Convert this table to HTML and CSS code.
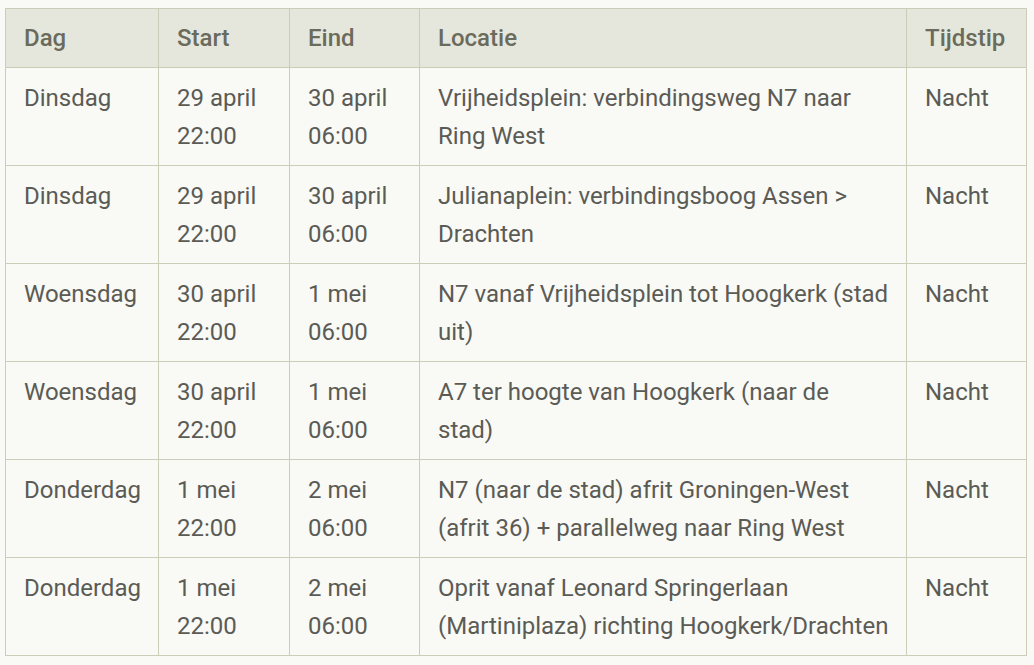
FILE: index.html
```html
<!DOCTYPE html>
<html lang="nl">
<head>
<meta charset="utf-8">
<link rel="stylesheet" href="styles.css">
</head>
<body>
<div class="wrap">
<table class="schedule">
<colgroup>
<col class="c-dag"><col class="c-start"><col class="c-eind"><col class="c-loc"><col class="c-tijd">
</colgroup>
<thead>
<tr><th>Dag</th><th>Start</th><th>Eind</th><th>Locatie</th><th>Tijdstip</th></tr>
</thead>
<tbody>
<tr><td>Dinsdag</td><td>29 april<br>22:00</td><td>30 april<br>06:00</td><td>Vrijheidsplein: verbindingsweg N7 naar Ring West</td><td>Nacht</td></tr>
<tr><td>Dinsdag</td><td>29 april<br>22:00</td><td>30 april<br>06:00</td><td>Julianaplein: verbindingsboog Assen &gt; Drachten</td><td>Nacht</td></tr>
<tr><td>Woensdag</td><td>30 april<br>22:00</td><td>1 mei<br>06:00</td><td>N7 vanaf Vrijheidsplein tot Hoogkerk (stad uit)</td><td>Nacht</td></tr>
<tr><td>Woensdag</td><td>30 april<br>22:00</td><td>1 mei<br>06:00</td><td>A7 ter hoogte van Hoogkerk (naar de stad)</td><td>Nacht</td></tr>
<tr><td>Donderdag</td><td>1 mei<br>22:00</td><td>2 mei<br>06:00</td><td>N7 (naar de stad) afrit Groningen-West (afrit 36) + parallelweg naar Ring West</td><td>Nacht</td></tr>
<tr><td>Donderdag</td><td>1 mei<br>22:00</td><td>2 mei<br>06:00</td><td>Oprit vanaf Leonard Springerlaan (Martiniplaza) richting Hoogkerk/Drachten</td><td>Nacht</td></tr>
</tbody>
</table>
</div>
</body>
</html>
```

FILE: styles.css
```css
html, body {
  margin: 0;
  padding: 0;
  background: #f9f9f5;
}
body {
  font-family: Roboto, "Liberation Sans", sans-serif;
  color: #5b5b55;
}
.wrap {
  padding: 8px 0 0 5px;
}
.schedule {
  border-collapse: collapse;
  table-layout: fixed;
  width: 1021px;
  font-size: 24px;
  line-height: 38px;
}
.c-dag { width: 153px; }
.c-start { width: 131px; }
.c-eind { width: 130px; }
.c-loc { width: 487px; }
.c-tijd { width: 120px; }
.schedule th,
.schedule td {
  border: 1px solid #cbcdb9;
  text-align: left;
  vertical-align: top;
  padding: 11px 17px 10px 18px;
}
.schedule th {
  background: #e6e7dc;
  font-weight: 500;
  color: #6b6b5c;
  padding-top: 10px;
  padding-bottom: 10px;
}
.schedule td {
  font-weight: 400;
}
```
